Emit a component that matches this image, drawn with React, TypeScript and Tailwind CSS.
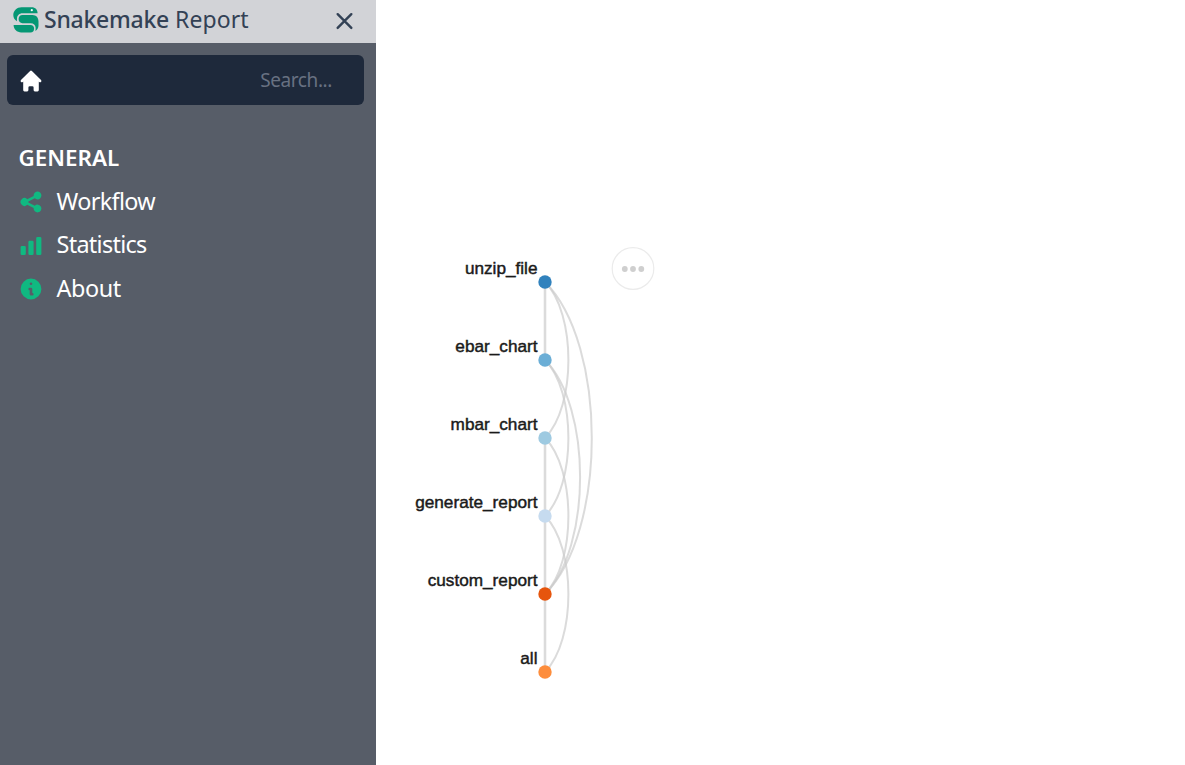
import React from "react";

type Rule = { name: string; color: string };

const rules: Rule[] = [
  { name: "unzip_file", color: "#3182bd" },
  { name: "ebar_chart", color: "#6baed6" },
  { name: "mbar_chart", color: "#9ecae1" },
  { name: "generate_report", color: "#c6dbef" },
  { name: "custom_report", color: "#e6550d" },
  { name: "all", color: "#fd8d3c" },
];

const edges: [number, number][] = [
  [0, 1], [0, 2], [0, 4], [1, 3], [1, 4],
  [2, 3], [2, 4], [3, 4], [3, 5], [4, 5],
];

const X = 169;
const yOf = (i: number) => 282 + i * 78;

function edgePath([a, b]: [number, number]) {
  const s = yOf(a);
  const t = yOf(b);
  if (b - a === 1) return `M${X} ${s}V${t}`;
  const k = 0.2 * (t - s);
  return `M${X} ${s}C${X + k} ${s + k} ${X + k} ${t - k} ${X} ${t}`;
}

const icons = {
  home: "M10.707 2.293a1 1 0 00-1.414 0l-7 7a1 1 0 001.414 1.414L4 10.414V17a1 1 0 001 1h2a1 1 0 001-1v-2a1 1 0 011-1h2a1 1 0 011 1v2a1 1 0 001 1h2a1 1 0 001-1v-6.586l.293.293a1 1 0 001.414-1.414l-7-7z",
  share: "M15 8a3 3 0 10-2.977-2.63l-4.94 2.47a3 3 0 100 4.319l4.94 2.47a3 3 0 10.895-1.789l-4.94-2.47a3.027 3.027 0 000-.74l4.94-2.47C13.456 7.68 14.19 8 15 8z",
  chart: "M2 11a1 1 0 011-1h2a1 1 0 011 1v5a1 1 0 01-1 1H3a1 1 0 01-1-1v-5zM8 7a1 1 0 011-1h2a1 1 0 011 1v9a1 1 0 01-1 1H9a1 1 0 01-1-1V7zM14 4a1 1 0 011-1h2a1 1 0 011 1v12a1 1 0 01-1 1h-2a1 1 0 01-1-1V4z",
  info: "M18 10a8 8 0 11-16 0 8 8 0 0116 0zm-7-4a1 1 0 11-2 0 1 1 0 012 0zM9 9a1 1 0 000 2v3a1 1 0 001 1h1a1 1 0 100-2v-3a1 1 0 00-1-1H9z",
};

function Icon({ path, className }: { path: string; className: string }) {
  return (
    <svg viewBox="0 0 20 20" fill="currentColor" className={`size-[26px] shrink-0 ${className}`}>
      <path fillRule="evenodd" clipRule="evenodd" d={path} />
    </svg>
  );
}

function Logo() {
  return (
    <svg viewBox="0 0 26 26" className="size-[26px] shrink-0" fill="#059774">
      <path d="M8.5 .3H18.5C22.5 .3 24.4 2.6 24.6 6.2H9.5C6.2 6.2 4.2 8.4 4 11.2L3.9 14.2C1.7 12.9 .3 10.8 .3 8C.3 3.8 4 .3 8.5 .3Z" />
      <path d="M9.5 8H19.5C23.2 8 25.5 10.8 25.5 14.5V18.5C25.5 20.8 24.2 22.8 22.4 24C22.6 23 22.7 22 22.6 20.6C22.4 18 20.6 16.2 17.8 16.2H9.5C7.2 16.2 5.6 14.6 5.6 12.1S7.2 8 9.5 8Z" />
      <path d="M.6 18.1H17.5C19.8 18.1 21.1 19.6 21.1 21.7S19.8 25.4 17.5 25.4H8.2C4 25.4 .6 22.5 .6 18.1Z" />
      <circle cx="18.8" cy="3.2" r="1.1" fill="#fff" />
    </svg>
  );
}

const menu = [
  { label: "Workflow", icon: icons.share, text: "tracking-[-0.65px]" },
  { label: "Statistics", icon: icons.chart, text: "tracking-[-0.7px]" },
  { label: "About", icon: icons.info, text: "tracking-[-0.4px]" },
];

function Sidebar() {
  return (
    <aside className="flex w-[376px] shrink-0 flex-col bg-[#575d68] text-white">
      <header className="flex h-[43px] items-center bg-[#d2d3d7] pb-[3px] pl-[12.5px] pr-[21px] text-[#334155]">
        <Logo />
        <h1 className="ml-[5.5px] flex-1 whitespace-nowrap pb-[2px] text-[23px] leading-[30px]">
          <span className="font-medium tracking-[-0.25px]">Snakemake</span>{" "}
          <span className="tracking-[0.1px]">Report</span>
        </h1>
        <svg viewBox="0 0 20 20" className="size-[21px]" stroke="currentColor" strokeWidth="2.3" strokeLinecap="round">
          <path d="M3.5 4L16.5 17M16.5 4L3.5 17" />
        </svg>
      </header>
      <div className="ml-[7px] mr-[12px] mt-3 flex h-[50px] items-center justify-between rounded-md bg-[#1e293b] pl-[11px] pr-8">
        <Icon path={icons.home} className="mt-px text-white" />
        <span className="text-[19px] leading-none tracking-[-0.4px] text-[#687182]">Search...</span>
      </div>
      <nav className="mt-[31px] pl-[18px] text-[23.4px]">
        <h2 className="h-[43.5px] pl-[0.5px] text-[22.4px] font-semibold leading-[43.5px]">GENERAL</h2>
        <ul>
          {menu.map((m) => (
            <li key={m.label} className="flex h-[43.5px] items-center gap-[12.5px]">
              <Icon path={m.icon} className="mt-[2px] text-[#10b981]" />
              <span className={m.text}>{m.label}</span>
            </li>
          ))}
        </ul>
      </nav>
    </aside>
  );
}

function RuleGraph() {
  return (
    <svg width="809" height="765" className="block">
      <g fill="none" stroke="#ccc" strokeOpacity="0.7" strokeWidth="2">
        {edges.map((e) => (
          <path key={e.join("-")} d={edgePath(e)} strokeWidth={e[1] - e[0] === 1 ? 2.6 : 2} />
        ))}
      </g>
      {rules.map((r, i) => (
        <g key={r.name}>
          <circle cx={X} cy={yOf(i)} r="6.7" fill={r.color} />
          <text
            x="161.5"
            y={yOf(i) - 8}
            textAnchor="end"
            fill="#1a1a1a"
            stroke="#1a1a1a"
            strokeWidth="0.45"
            className="font-['Liberation_Sans',Arial,sans-serif] text-[17.2px]"
          >
            {r.name}
          </text>
        </g>
      ))}
      <g>
        <circle cx="257" cy="268.5" r="20.8" fill="#fff" stroke="#ebebeb" strokeWidth="1.2" />
        {[248.8, 257, 265.3].map((x) => (
          <circle key={x} cx={x} cy="269" r="2.9" fill="#cfcfcf" />
        ))}
      </g>
    </svg>
  );
}

export default function App() {
  return (
    <div className="flex h-[765px] w-[1185px] overflow-hidden bg-white font-['Noto_Sans','Open_Sans',sans-serif]">
      <Sidebar />
      <main className="flex-1">
        <RuleGraph />
      </main>
    </div>
  );
}
